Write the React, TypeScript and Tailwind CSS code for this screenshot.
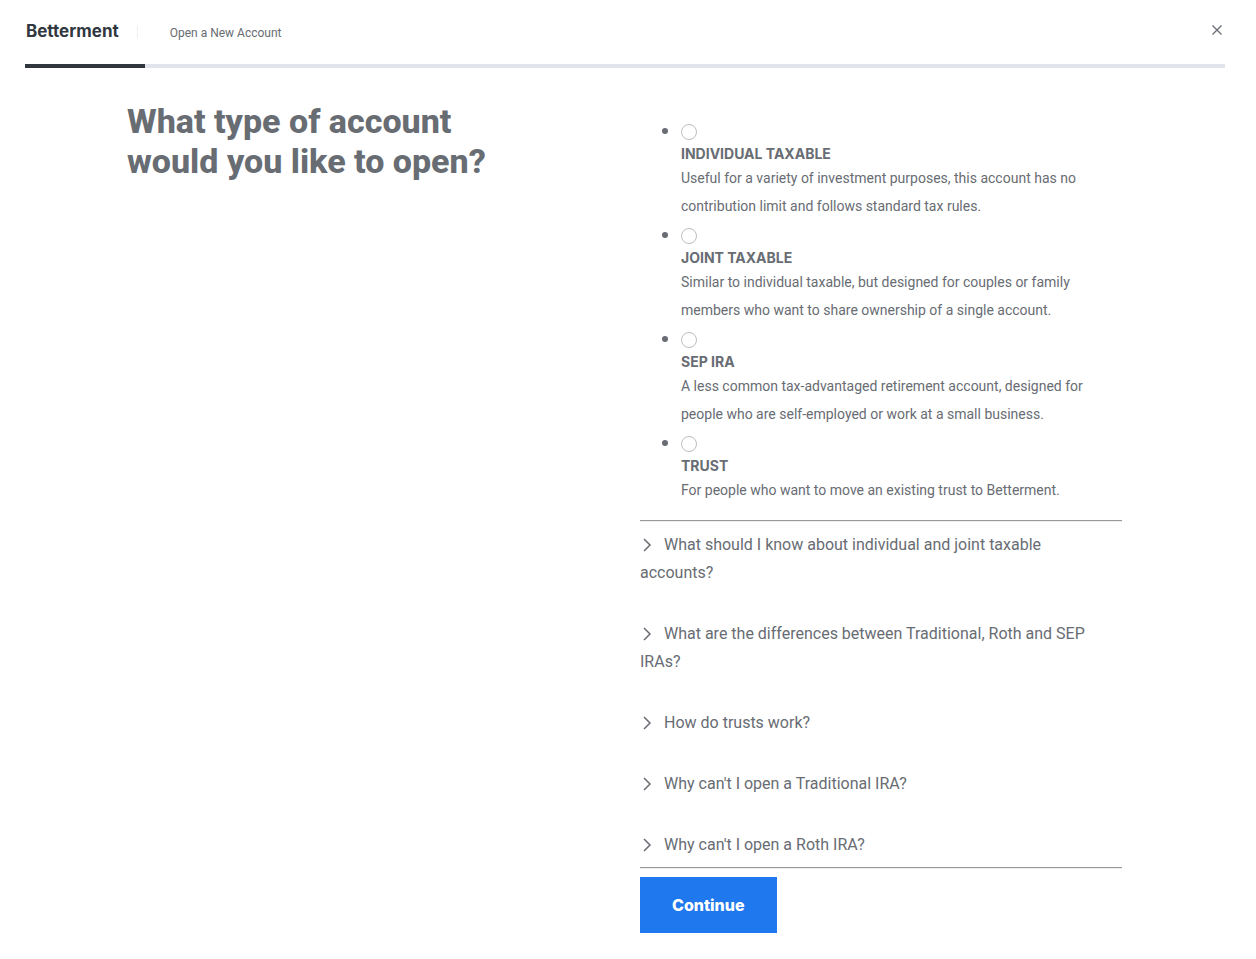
import { useState } from "react";

const accounts = [
  {
    id: "individual",
    title: "INDIVIDUAL TAXABLE",
    lines: [
      "Useful for a variety of investment purposes, this account has no",
      "contribution limit and follows standard tax rules.",
    ],
  },
  {
    id: "joint",
    title: "JOINT TAXABLE",
    lines: [
      "Similar to individual taxable, but designed for couples or family",
      "members who want to share ownership of a single account.",
    ],
  },
  {
    id: "sep",
    title: "SEP IRA",
    lines: [
      "A less common tax-advantaged retirement account, designed for",
      "people who are self-employed or work at a small business.",
    ],
  },
  {
    id: "trust",
    title: "TRUST",
    lines: ["For people who want to move an existing trust to Betterment."],
  },
];

const questions = [
  ["What should I know about individual and joint taxable", "accounts?"],
  ["What are the differences between Traditional, Roth and SEP", "IRAs?"],
  ["How do trusts work?"],
  ["Why can't I open a Traditional IRA?"],
  ["Why can't I open a Roth IRA?"],
];

function Header() {
  return (
    <header className="pr-[31px] pl-[25px]">
      <div className="flex h-16 items-center">
        <a href="#" className="pb-0.5 pl-px font-[Inter,sans-serif] text-[17px] leading-6 font-bold text-[#30373f]">
          Betterment
        </a>
        <span className="ml-[18px] h-3 w-px bg-[#eeeff2]" />
        <span className="ml-8 pt-0.5 text-xs leading-4">Open a New Account</span>
        <button type="button" aria-label="Close" className="mr-0.5 ml-auto pb-1">
          <svg viewBox="0 0 12 12" className="size-3" fill="none" stroke="currentColor" strokeWidth="1.3">
            <path d="M1.5 1.5l9 9M10.5 1.5l-9 9" />
          </svg>
        </button>
      </div>
      <div className="h-1 bg-[#e1e4ec]">
        <div className="h-full w-1/10 bg-[#2f363e]" />
      </div>
    </header>
  );
}

function Divider() {
  return <hr className="border-t border-b border-t-[#999999] border-b-[#eeeeee]" />;
}

export default function App() {
  const [selected, setSelected] = useState("");
  return (
    <div className="bg-white font-[Roboto,sans-serif] text-[#686c73]">
      <Header />
      <main className="grid grid-cols-2 gap-x-[31px] pt-8 pr-[134px] pb-6 pl-[127px]">
        <h1 className="pt-px text-[34px] leading-10 font-extrabold">
          What type of account
          <br />
          would you like to open?
        </h1>
        <form className="pt-4" onSubmit={(e) => e.preventDefault()}>
          <ul className="list-disc pl-[41px]">
            {accounts.map((a) => (
              <li key={a.id} className="text-sm leading-7 marker:text-xl">
                <div className="h-[26px]">
                  <input
                    type="radio"
                    id={a.id}
                    name="account"
                    checked={selected === a.id}
                    onChange={() => setSelected(a.id)}
                    className="size-4 appearance-none rounded-full border border-[#bdbdbd] align-[-3px] checked:border-[5px] checked:border-[#1f78ed]"
                  />
                </div>
                <label htmlFor={a.id} className="block">
                  <span className="block font-[Inter,sans-serif] leading-5 font-bold">{a.title}</span>
                  {a.lines.map((line) => (
                    <span key={line} className="block">{line}</span>
                  ))}
                </label>
              </li>
            ))}
          </ul>
          <div className="pt-4">
            <Divider />
          </div>
          <div className="flex flex-col gap-[33px] pt-[9px] pb-2">
            {questions.map((lines) => (
              <button key={lines[0]} type="button" className="text-left text-base leading-7">
                <svg
                  viewBox="0 0 14 14"
                  className="mr-2.5 inline size-3.5 align-[-2px]"
                  fill="none"
                  stroke="currentColor"
                  strokeWidth="1.5"
                >
                  <path d="M4 1l6 6-6 6" />
                </svg>
                {lines[0]}
                {lines[1] && (
                  <>
                    <br />
                    {lines[1]}
                  </>
                )}
              </button>
            ))}
          </div>
          <Divider />
          <button
            type="submit"
            className="mt-2 h-14 bg-[#1f78ed] px-8 font-[Inter,sans-serif] text-base font-extrabold text-white"
          >
            Continue
          </button>
        </form>
      </main>
    </div>
  );
}
